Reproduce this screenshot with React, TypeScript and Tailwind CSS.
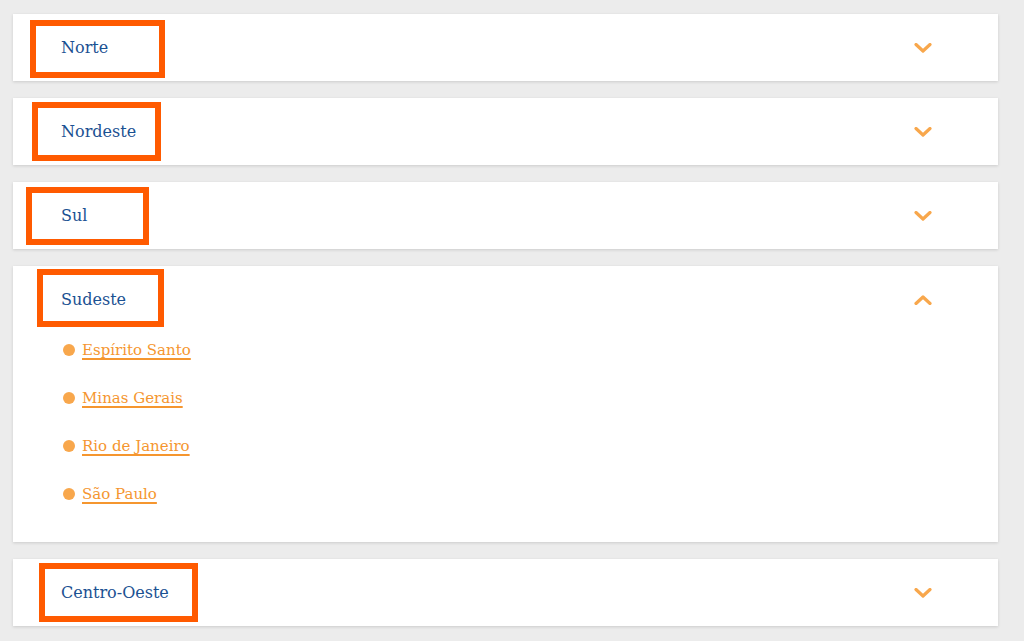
import React from 'react';

type Region = {
  name: string;
  open?: boolean;
  states?: string[];
  // annotation box, relative to the card
  box: { top: number; left: number; w: number; h: number };
};

const regions: Region[] = [
  { name: 'Norte', box: { top: 6, left: 17, w: 135, h: 58 } },
  { name: 'Nordeste', box: { top: 4, left: 19, w: 129, h: 59 } },
  { name: 'Sul', box: { top: 5, left: 13, w: 123, h: 58 } },
  {
    name: 'Sudeste',
    open: true,
    states: ['Espírito Santo', 'Minas Gerais', 'Rio de Janeiro', 'São Paulo'],
    box: { top: 3, left: 24, w: 127, h: 58 },
  },
  { name: 'Centro-Oeste', box: { top: 4, left: 26, w: 159, h: 59 } },
];

function Chevron({ up }: { up?: boolean }) {
  return (
    <svg width="18" height="10" viewBox="0 0 18 10" className="shrink-0">
      <polyline
        points={up ? '2,8.5 9,2 16,8.5' : '2,1.5 9,8 16,1.5'}
        fill="none"
        stroke="#f8a74c"
        strokeWidth="3.2"
        strokeLinecap="round"
        strokeLinejoin="round"
      />
    </svg>
  );
}

function RegionCard({ region }: { region: Region }) {
  return (
    <div className="relative bg-white shadow-[0_1px_3px_rgba(0,0,0,0.14)]">
      <div className="flex h-[67px] items-center justify-between pl-[48px] pr-[66px]">
        <span className="text-[16px] text-[#1b5192]">{region.name}</span>
        <Chevron up={region.open} />
      </div>
      {region.open && region.states && (
        <ul className="flex flex-col gap-[28px] pb-[38px] pl-[50px] pt-[7px]">
          {region.states.map((s) => (
            <li key={s} className="flex h-[20px] items-center gap-[7px]">
              <span className="h-[12px] w-[12px] rounded-full bg-[#f8a74c]" />
              <a
                href="#"
                className="text-[15px] text-[#f5962f] underline decoration-[1.5px] underline-offset-[3px]"
              >
                {s}
              </a>
            </li>
          ))}
        </ul>
      )}
      <div
        className="pointer-events-none absolute border-[6px] border-[#ff5a00]"
        style={{
          top: region.box.top,
          left: region.box.left,
          width: region.box.w,
          height: region.box.h,
        }}
      />
    </div>
  );
}

export default function App() {
  return (
    <div
      className="min-h-[641px] w-full bg-[#ececec] px-[13px] pt-[14px] pb-[15px]"
      style={{ fontFamily: '"DejaVu Serif", "Liberation Serif", serif' }}
    >
      <div className="flex w-[985px] flex-col gap-[17px]">
        {regions.map((r) => (
          <RegionCard key={r.name} region={r} />
        ))}
      </div>
    </div>
  );
}
